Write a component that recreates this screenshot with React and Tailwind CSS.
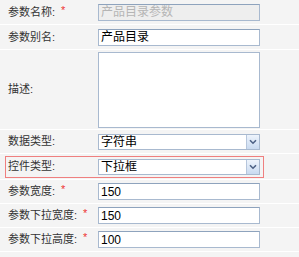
const font = { fontFamily: '"Liberation Sans", "Noto Sans CJK SC", sans-serif' };

const Label = ({ text, required }) => (
  <div className="w-[98px] shrink-0 pl-2 text-[11px] text-[#333] flex items-center whitespace-nowrap">
    <span>{text}</span>
    {required && <span className="ml-[6px] text-[#e33] text-[11px] -mt-1">*</span>}
  </div>
);

const TextInput = ({ value, disabled }) => (
  <div
    className={`w-[162px] h-[17px] border border-[#a8b9cf] border-t-[#8ea3bd] flex items-center px-[2px] text-[12px] leading-none ${
      disabled ? "bg-[#eeeeee] text-[#b5b5b5]" : "bg-white text-black"
    }`}
  >
    {value}
  </div>
);

const Select = ({ value }) => (
  <div className="w-[162px] h-[16px] border border-[#a8b9cf] bg-white flex items-center justify-between text-[12px] leading-none">
    <span className="pl-[2px]">{value}</span>
    <span className="w-[13px] h-[14px] border-l border-[#b6c6dc] bg-gradient-to-b from-[#eef4fc] to-[#c9daf0] flex items-center justify-center">
      <svg width="8" height="6" viewBox="0 0 8 6">
        <path d="M1 1.2 L4 4.2 L7 1.2" fill="none" stroke="#4d6185" strokeWidth="1.6" />
      </svg>
    </span>
  </div>
);

const Row = ({ h, children }) => (
  <div className={`flex items-center border-b border-white ${h}`}>{children}</div>
);

export default function App() {
  return (
    <div className="w-[299px] h-[257px] bg-[#f4f4f4] overflow-hidden" style={font}>
      <Row h="h-[25px]">
        <Label text="参数名称:" required />
        <TextInput value="产品目录参数" disabled />
      </Row>
      <Row h="h-[25px]">
        <Label text="参数别名:" />
        <TextInput value="产品目录" />
      </Row>
      <Row h="h-[80px]">
        <Label text="描述:" />
        <div className="w-[162px] h-[76px] border border-[#a8b9cf] bg-white" />
      </Row>
      <Row h="h-[24px]">
        <Label text="数据类型:" />
        <Select value="字符串" />
      </Row>
      <div className="h-[26px] border-b border-white flex items-center">
        <div className="ml-[5px] w-[259px] h-[22px] border border-[#ef7f7f] flex items-center">
          <div className="w-[92px] shrink-0 pl-[2px] text-[11px] text-[#333] whitespace-nowrap">控件类型:</div>
          <Select value="下拉框" />
        </div>
      </div>
      <Row h="h-[24px]">
        <Label text="参数宽度:" required />
        <TextInput value="150" />
      </Row>
      <Row h="h-[24px]">
        <Label text="参数下拉宽度:" required />
        <TextInput value="150" />
      </Row>
      <Row h="h-[24px]">
        <Label text="参数下拉高度:" required />
        <TextInput value="100" />
      </Row>
    </div>
  );
}
